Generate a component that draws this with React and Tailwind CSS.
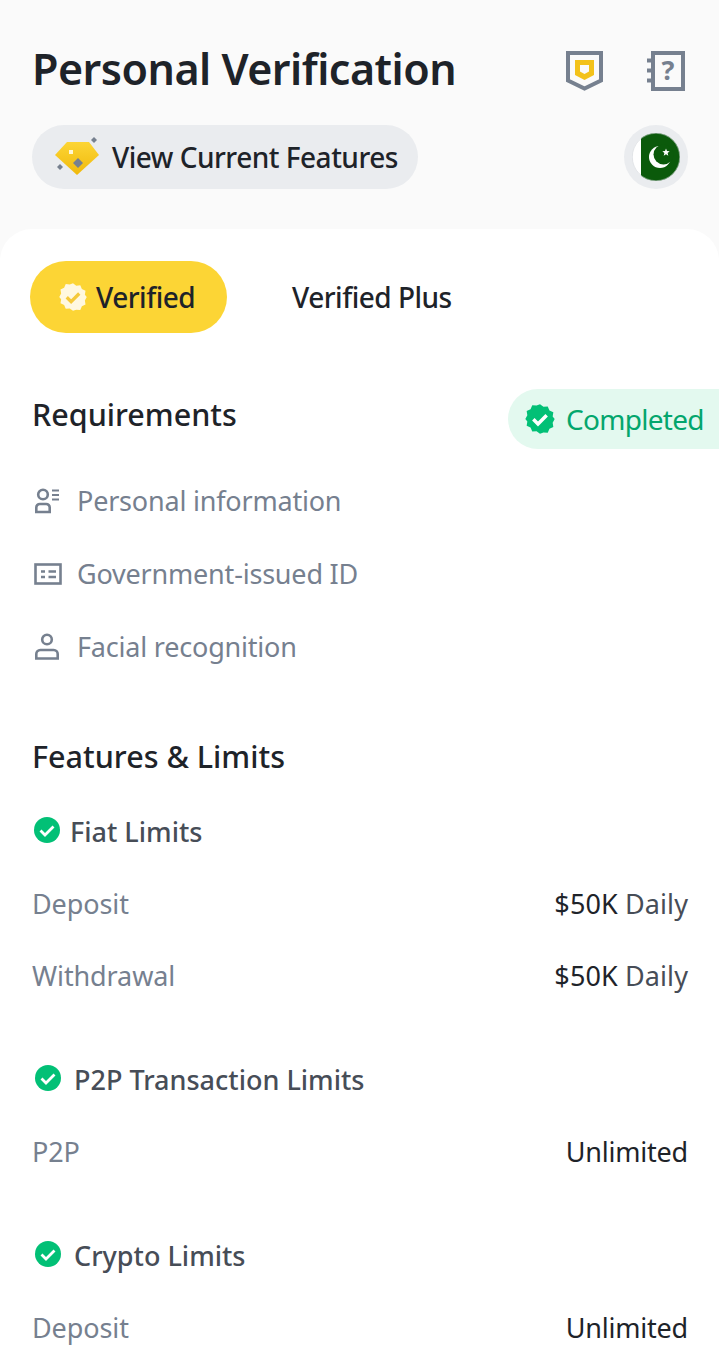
const F = { fontFamily: '"Noto Sans", "Liberation Sans", sans-serif' };

function Shield() {
  return (
    <svg width="38" height="40" viewBox="0 0 38 40" fill="none">
      <path d="M2 2h33v27.500L18.500 37.500 2 29.500z" stroke="#76808f" strokeWidth="4" />
      <path d="M9 9h19v15l-9.500 5-9.500-5z" fill="#f3c21a" />
      <path d="M14 14h9v6.500l-4.500 2.500-4.500-2.500z" fill="#fafafa" />
    </svg>
  );
}

function Book() {
  return (
    <svg width="38" height="40" viewBox="0 0 38 40" fill="none">
      <path d="M6 2h30v36H6z" stroke="#76808f" strokeWidth="4" />
      <path d="M0 9.500h6M0 19.500h6M0 29.500h6" stroke="#76808f" strokeWidth="4" />
      <text x="21" y="29" textAnchor="middle" fontSize="27" fontWeight="700" fill="#76808f" style={{ fontFamily: '"Noto Sans", sans-serif' }}>?</text>
    </svg>
  );
}

function Diamond() {
  return (
    <svg width="46" height="42" viewBox="0 0 46 42">
      <defs>
        <linearGradient id="gem" x1="0" y1="0" x2="0" y2="1">
          <stop offset="0" stopColor="#fcd535" />
          <stop offset="1" stopColor="#f0b90b" />
        </linearGradient>
      </defs>
      <path d="M13 6h22l10 13-22 20L1 19z" fill="url(#gem)" />
      <rect x="15" y="14" width="4" height="4" fill="#fff7d6" />
      <path d="M24 22l5 5-5 5-5-5z" fill="#76808f" />
      <path d="M40 1l3 3-3 3-3-3z" fill="#76808f" />
      <path d="M6 28l3 3-3 3-3-3z" fill="#76808f" />
    </svg>
  );
}

const badgePath =
  "M12 1l2.600 1.900 3.200-.300 1.300 3 2.900 1.400-.500 3.200L23 12l-1.500 2.800.500 3.200-2.900 1.400-1.300 3-3.200-.300L12 23l-2.600-1.900-3.200.300-1.300-3-2.900-1.400.500-3.200L1 12l1.500-2.800L2 6l2.900-1.400 1.300-3 3.200.300z";

function Badge({ size, fill, tick }) {
  return (
    <svg width={size} height={size} viewBox="0 0 24 24">
      <path d={badgePath} fill={fill} />
      <path d="M7 12.200l3.500 3.500L17 9.200" fill="none" stroke={tick} strokeWidth="2.600" />
    </svg>
  );
}

function Flag() {
  return (
    <div className="w-16 h-16 rounded-full bg-[#eaecef] flex items-center justify-center">
      <svg width="48" height="48" viewBox="0 0 48 48">
        <clipPath id="fc"><circle cx="24" cy="24" r="24" /></clipPath>
        <g clipPath="url(#fc)">
          <rect width="48" height="48" fill="#ffffff" />
          <rect x="9" width="39" height="48" fill="#0b5a0b" />
          <circle cx="28" cy="24" r="11" fill="#ffffff" />
          <circle cx="31.500" cy="21.500" r="10" fill="#0b5a0b" />
          <path d="M34 15.500l1 2.600 2.700.200-2.100 1.700.700 2.700-2.300-1.500-2.300 1.500.700-2.700-2.100-1.700 2.700-.200z" fill="#ffffff" />
        </g>
        <circle cx="24" cy="24" r="23.700" fill="none" stroke="#c8ccd2" strokeWidth="0.500" />
      </svg>
    </div>
  );
}

function IconPerson() {
  return (
    <svg width="26" height="26" viewBox="0 0 26 26" fill="none" stroke="#76808f" strokeWidth="2.600">
      <circle cx="9" cy="6.500" r="4.800" />
      <path d="M2.300 24v-4.500a3.500 3.500 0 0 1 3.500-3.500h6.400a3.500 3.500 0 0 1 3.500 3.500V24z" />
      <path d="M18 2.500h7M18 7h7M18 11.500h7" strokeWidth="2" />
    </svg>
  );
}

function IconCard() {
  return (
    <svg width="28" height="24" viewBox="0 0 28 24" fill="none" stroke="#76808f">
      <rect x="1.500" y="2.500" width="25" height="19" strokeWidth="2.600" />
      <path d="M7 9.500h4M7 15h4M14.500 9.500h7.500M14.500 15h7.500" strokeWidth="2.600" />
    </svg>
  );
}

function IconFace() {
  return (
    <svg width="26" height="28" viewBox="0 0 26 28" fill="none" stroke="#76808f" strokeWidth="2.600">
      <circle cx="13" cy="6.500" r="4.800" />
      <path d="M2.300 25.500v-4.500a4 4 0 0 1 4-4h13.400a4 4 0 0 1 4 4v4.500z" />
    </svg>
  );
}

function Check({ className }) {
  return (
    <svg className={className} width="26" height="26" viewBox="0 0 26 26">
      <circle cx="13" cy="13" r="13" fill="#02c076" />
      <path d="M6.500 13.500l4.500 4.500 8.500-8.500" fill="none" stroke="#fff" strokeWidth="2.800" />
    </svg>
  );
}

function Req({ icon, label }) {
  return (
    <div className="flex items-center h-[73px]">
      <div className="w-[45px] flex pl-[2px] mb-[2px]">{icon}</div>
      <span className="text-[27px] text-[#76808f] tracking-[-0.2px]">{label}</span>
    </div>
  );
}

function Row({ label, children }) {
  return (
    <div className="flex justify-between items-center h-[72px] text-[27px]">
      <span className="text-[#76808f] tracking-[-0.1px]">{label}</span>
      {children}
    </div>
  );
}

function Daily() {
  return (
    <span className="text-[#1e2329] tracking-[0.1px]">
      $50K <span className="text-[#474d57]">Daily</span>
    </span>
  );
}

function Unlimited() {
  return <span className="text-[#1e2329] tracking-[-0.2px]">Unlimited</span>;
}

function Group({ title, wide, children }) {
  return (
    <div>
      <div className="flex items-center h-[72px]">
        <Check className={wide ? "ml-[3px] mr-[13px] mb-[4px]" : "ml-[2px] mr-[10px] mb-[4px]"} />
        <span className="text-[27px] font-medium text-[#474d57]">{title}</span>
      </div>
      {children}
    </div>
  );
}

export default function App() {
  return (
    <div className="w-[719px] h-[1346px] overflow-hidden bg-[#fafafa]" style={F}>
      <div className="pl-[32px] pr-[31px] pt-[40px] h-[229px]">
        <div className="flex items-center justify-between h-[56px]">
          <h1 className="text-[43px] font-semibold text-[#1e2329] leading-none tracking-[-0.5px]">Personal Verification</h1>
          <div className="flex items-center gap-[43px] pr-[3px] mt-[6px]">
            <Shield />
            <Book />
          </div>
        </div>
        <div className="flex items-center justify-between mt-[29px]">
          <div className="flex items-center h-16 w-[386px] rounded-full bg-[#eaecef] pl-[22px]">
            <Diamond />
            <span className="ml-[12px] text-[28px] font-medium text-[#1e2329] tracking-[-0.5px]">View Current Features</span>
          </div>
          <Flag />
        </div>
      </div>
      <div className="bg-white rounded-t-[32px] pt-[32px] h-[1117px]">
        <div className="flex items-center px-[30px]">
          <div className="flex items-center h-[72px] w-[197px] rounded-full bg-[#fcd535] pl-[28px]">
            <Badge size={30} fill="#fff8e0" tick="#f5c93a" />
            <span className="ml-[8px] text-[28px] font-medium text-[#1e2329] tracking-[-0.5px]">Verified</span>
          </div>
          <span className="ml-[65px] text-[28px] font-medium text-[#1e2329] tracking-[-0.5px]">Verified Plus</span>
        </div>

        <div className="flex justify-between items-start mt-[56px]">
          <h2 className="pl-[32px] text-[30.500px] font-medium text-[#1e2329] leading-[50px]">Requirements</h2>
          <div className="flex items-center w-[211px] h-[60px] rounded-l-full bg-[#e3f9ef] pl-[16px]">
            <Badge size={32} fill="#02c076" tick="#ffffff" />
            <span className="ml-[10px] text-[28px] text-[#03a66d] tracking-[-0.7px]">Completed</span>
          </div>
        </div>

        <div className="pl-[32px] mt-[16px]">
          <Req icon={<IconPerson />} label="Personal information" />
          <Req icon={<IconCard />} label="Government-issued ID" />
          <Req icon={<IconFace />} label="Facial recognition" />
        </div>

        <div className="pl-[32px] pr-[31px] mt-[47px]">
          <h2 className="text-[30.500px] font-medium text-[#1e2329] leading-[50px]">Features &amp; Limits</h2>
          <div className="mt-[15px]">
            <Group title="Fiat Limits">
              <Row label="Deposit"><Daily /></Row>
              <Row label="Withdrawal"><Daily /></Row>
            </Group>
          </div>
          <div className="mt-[32px]">
            <Group title="P2P Transaction Limits" wide>
              <Row label="P2P"><Unlimited /></Row>
            </Group>
          </div>
          <div className="mt-[32px]">
            <Group title="Crypto Limits" wide>
              <Row label="Deposit"><Unlimited /></Row>
            </Group>
          </div>
        </div>
      </div>
    </div>
  );
}
